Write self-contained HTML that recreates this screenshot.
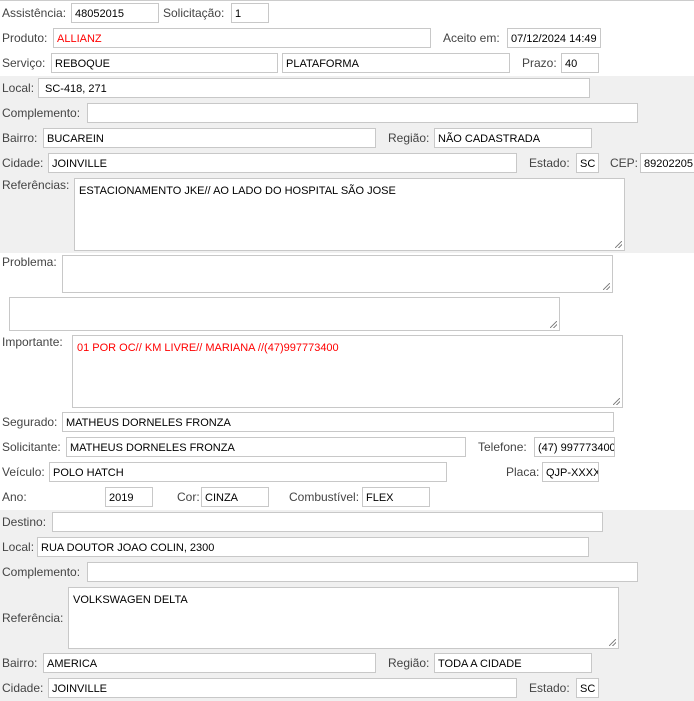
<!DOCTYPE html>
<html><head><meta charset="utf-8"><style>
body{margin:0;width:694px;height:701px;overflow:hidden;background:#fff;position:relative;font-family:"Liberation Sans","DejaVu Sans",sans-serif;}
.g{position:absolute;left:0;width:694px;background:#f0f0f0}
.l{position:absolute;font-size:12px;color:#444;line-height:21px;white-space:nowrap}
.b{position:absolute;height:18px;border:1px solid #c8c8c8;background:#fff;font-size:11px;color:#000;line-height:20px;padding-left:3px;box-sizing:content-box;white-space:nowrap;overflow:hidden}
.t{position:absolute;border:1px solid #c8c8c8;background:#fff;font-size:11px;color:#000;padding:6px 0 0 4px;box-sizing:border-box;white-space:nowrap;overflow:hidden}
.t:after{content:"";position:absolute;right:2px;bottom:2px;width:7px;height:7px;background:linear-gradient(135deg,transparent 45%,#888 45%,#888 55%,transparent 55%,transparent 70%,#888 70%,#888 80%,transparent 80%)}
.r{color:#f00}
</style></head><body>
<div style="position:absolute;left:0;top:0;width:694px;height:1px;background:#ccc"></div>
<div class="g" style="top:76px;height:177px"></div>
<div class="g" style="top:510px;height:191px"></div>

<div class="l" style="left:2px;top:3px">Assistência:</div><div class="b" style="left:71px;top:3px;width:83px">48052015</div>
<div class="l" style="left:163px;top:3px">Solicitação:</div><div class="b" style="left:231px;top:3px;width:33px">1</div>

<div class="l" style="left:2px;top:28px">Produto:</div><div class="b r" style="left:53px;top:28px;width:373px">ALLIANZ</div>
<div class="l" style="left:443px;top:28px">Aceito em:</div><div class="b" style="left:507px;top:28px;width:89px">07/12/2024 14:49</div>

<div class="l" style="left:2px;top:53px">Serviço:</div><div class="b" style="left:51px;top:53px;width:222px">REBOQUE</div>
<div class="b" style="left:282px;top:53px;width:223px">PLATAFORMA</div>
<div class="l" style="left:522px;top:53px">Prazo:</div><div class="b" style="left:561px;top:53px;width:33px">40</div>

<div class="l" style="left:2px;top:78px">Local:</div><div class="b" style="left:38px;top:78px;width:544px;padding-left:6px">SC-418, 271</div>
<div class="l" style="left:2px;top:103px">Complemento:</div><div class="b" style="left:87px;top:103px;width:546px"></div>
<div class="l" style="left:2px;top:128px">Bairro:</div><div class="b" style="left:43px;top:128px;width:328px">BUCAREIN</div>
<div class="l" style="left:388px;top:128px">Região:</div><div class="b" style="left:434px;top:128px;width:153px">NÃO CADASTRADA</div>
<div class="l" style="left:2px;top:153px">Cidade:</div><div class="b" style="left:48px;top:153px;width:464px">JOINVILLE</div>
<div class="l" style="left:529px;top:153px">Estado:</div><div class="b" style="left:576px;top:153px;width:18px">SC</div>
<div class="l" style="left:610px;top:153px">CEP:</div><div class="b" style="left:640px;top:153px;width:60px">89202205</div>
<div class="l" style="left:2px;top:175px">Referências:</div><div class="t" style="left:74px;top:178px;width:551px;height:73px">ESTACIONAMENTO JKE// AO LADO DO HOSPITAL SÃO JOSE</div>

<div class="l" style="left:2px;top:252px">Problema:</div><div class="t" style="left:62px;top:255px;width:551px;height:38px"></div>
<div class="t" style="left:9px;top:297px;width:551px;height:34px"></div>
<div class="l" style="left:2px;top:332px">Importante:</div><div class="t r" style="left:72px;top:335px;width:551px;height:73px">01 POR OC// KM LIVRE// MARIANA //(47)997773400</div>

<div class="l" style="left:2px;top:412px">Segurado:</div><div class="b" style="left:62px;top:412px;width:547px">MATHEUS DORNELES FRONZA</div>
<div class="l" style="left:2px;top:437px">Solicitante:</div><div class="b" style="left:66px;top:437px;width:395px">MATHEUS DORNELES FRONZA</div>
<div class="l" style="left:478px;top:437px">Telefone:</div><div class="b" style="left:534px;top:437px;width:76px">(47) 997773400</div>
<div class="l" style="left:2px;top:462px">Veículo:</div><div class="b" style="left:49px;top:462px;width:393px">POLO HATCH</div>
<div class="l" style="left:506px;top:462px">Placa:</div><div class="b" style="left:542px;top:462px;width:52px">QJP-XXXX</div>
<div class="l" style="left:2px;top:487px">Ano:</div><div class="b" style="left:105px;top:487px;width:43px">2019</div>
<div class="l" style="left:177px;top:487px">Cor:</div><div class="b" style="left:201px;top:487px;width:63px">CINZA</div>
<div class="l" style="left:289px;top:487px">Combustível:</div><div class="b" style="left:362px;top:487px;width:63px">FLEX</div>

<div class="l" style="left:2px;top:512px">Destino:</div><div class="b" style="left:52px;top:512px;width:546px"></div>
<div class="l" style="left:2px;top:537px">Local:</div><div class="b" style="left:37px;top:537px;width:547px">RUA DOUTOR JOAO COLIN, 2300</div>
<div class="l" style="left:2px;top:562px">Complemento:</div><div class="b" style="left:87px;top:562px;width:546px"></div>
<div class="l" style="left:2px;top:608px">Referência:</div><div class="t" style="left:68px;top:587px;width:551px;height:62px">VOLKSWAGEN DELTA</div>
<div class="l" style="left:2px;top:653px">Bairro:</div><div class="b" style="left:43px;top:653px;width:328px">AMERICA</div>
<div class="l" style="left:388px;top:653px">Região:</div><div class="b" style="left:434px;top:653px;width:153px">TODA A CIDADE</div>
<div class="l" style="left:2px;top:678px">Cidade:</div><div class="b" style="left:48px;top:678px;width:464px">JOINVILLE</div>
<div class="l" style="left:529px;top:678px">Estado:</div><div class="b" style="left:576px;top:678px;width:18px">SC</div>
</body></html>
